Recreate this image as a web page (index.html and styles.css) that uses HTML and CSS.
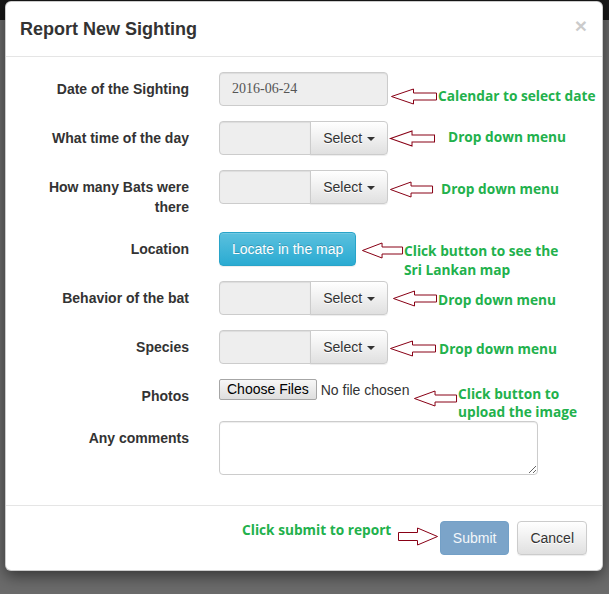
FILE: index.html
```html
<!DOCTYPE html>
<html lang="en">
<head>
<meta charset="utf-8">
<title>Report New Sighting</title>
<link rel="stylesheet" href="styles.css">
</head>
<body>
<div class="modal">
  <div class="modal-header">
    <h4 class="modal-title">Report New Sighting</h4>
    <button class="close" type="button">×</button>
  </div>
  <div class="modal-body">
    <div class="row">
      <label class="label">Date of the Sighting</label>
      <div class="ctrl"><div class="input date">2016-06-24</div></div>
    </div>
    <div class="row">
      <label class="label">What time of the day</label>
      <div class="ctrl"><div class="input-group"><div class="input"></div><button class="btn btn-default btn-select" type="button">Select <span class="caret"></span></button></div></div>
    </div>
    <div class="row">
      <label class="label">How many Bats were there</label>
      <div class="ctrl"><div class="input-group"><div class="input"></div><button class="btn btn-default btn-select" type="button">Select <span class="caret"></span></button></div></div>
    </div>
    <div class="row">
      <label class="label">Location</label>
      <div class="ctrl"><button class="btn btn-info" type="button">Locate in the map</button></div>
    </div>
    <div class="row">
      <label class="label">Behavior of the bat</label>
      <div class="ctrl"><div class="input-group"><div class="input"></div><button class="btn btn-default btn-select" type="button">Select <span class="caret"></span></button></div></div>
    </div>
    <div class="row">
      <label class="label">Species</label>
      <div class="ctrl"><div class="input-group"><div class="input"></div><button class="btn btn-default btn-select" type="button">Select <span class="caret"></span></button></div></div>
    </div>
    <div class="row">
      <label class="label">Photos</label>
      <div class="ctrl file"><button class="file-btn" type="button">Choose Files</button><span class="file-none">No file chosen</span></div>
    </div>
    <div class="row">
      <label class="label">Any comments</label>
      <div class="ctrl"><textarea class="textarea" rows="2"></textarea></div>
    </div>
  </div>
  <div class="modal-footer">
    <button class="btn btn-primary" type="button">Submit</button>
    <button class="btn btn-default" type="button">Cancel</button>
  </div>
</div>

<svg class="arrow a1" viewBox="0 0 46 17" preserveAspectRatio="none"><polygon points="0.5,8.5 22.5,1 22.5,5 45.5,5 45.5,12 22.5,12 22.5,16"/></svg>
<div class="note t1">Calendar to select date</div>

<svg class="arrow a2" viewBox="0 0 46 17" preserveAspectRatio="none"><polygon points="0.5,8.5 22.5,1 22.5,5 45.5,5 45.5,12 22.5,12 22.5,16"/></svg>
<div class="note t2">Drop down menu</div>

<svg class="arrow a3" viewBox="0 0 46 17" preserveAspectRatio="none"><polygon points="0.5,8.5 22.5,1 22.5,5 45.5,5 45.5,12 22.5,12 22.5,16"/></svg>
<div class="note t3">Drop down menu</div>

<svg class="arrow a4" viewBox="0 0 46 17" preserveAspectRatio="none"><polygon points="0.5,8.5 22.5,1 22.5,5 45.5,5 45.5,12 22.5,12 22.5,16"/></svg>
<div class="note t4">Click button to see the<br>Sri Lankan map</div>

<svg class="arrow a5" viewBox="0 0 46 17" preserveAspectRatio="none"><polygon points="0.5,8.5 22.5,1 22.5,5 45.5,5 45.5,12 22.5,12 22.5,16"/></svg>
<div class="note t5">Drop down menu</div>

<svg class="arrow a6" viewBox="0 0 46 17" preserveAspectRatio="none"><polygon points="0.5,8.5 22.5,1 22.5,5 45.5,5 45.5,12 22.5,12 22.5,16"/></svg>
<div class="note t6">Drop down menu</div>

<svg class="arrow a7" viewBox="0 0 46 17" preserveAspectRatio="none"><polygon points="0.5,8.5 22.5,1 22.5,5 45.5,5 45.5,12 22.5,12 22.5,16"/></svg>
<div class="note t7">Click button to<br>upload the image</div>

<div class="note t8">Click submit to report</div>
<svg class="arrow a8" viewBox="0 0 40 19" preserveAspectRatio="none"><polygon points="39.5,9.5 19.5,1 19.5,5.5 0.5,5.5 0.5,13.5 19.5,13.5 19.5,18"/></svg>
</body>
</html>
```
FILE: styles.css
```css
* { box-sizing: border-box; }

body {
  margin: 0;
  width: 609px;
  height: 594px;
  overflow: hidden;
  position: relative;
  background: linear-gradient(#171717 0, #171717 20px, #6b6b6b 20px);
  font-family: "Liberation Sans", Arial, sans-serif;
  font-size: 14px;
  line-height: 20px;
  color: #333;
}

.modal {
  margin: 1px 0 0 5px;
  width: 598px;
  background: #fff;
  border: 1px solid rgba(0, 0, 0, .2);
  border-radius: 6px;
  box-shadow: 0 5px 15px rgba(0, 0, 0, .5);
}

.modal-header {
  display: flex;
  justify-content: space-between;
  align-items: flex-start;
  padding: 15px 15px 15px 14px;
  border-bottom: 1px solid #e5e5e5;
}

.modal-title {
  margin: 0;
  font-size: 18px;
  line-height: 24px;
  font-weight: bold;
  color: #333;
}

.close {
  margin-top: -2px;
  padding: 0;
  border: 0;
  background: none;
  font: bold 21px/1 "Liberation Sans", Arial, sans-serif;
  color: #000;
  opacity: .2;
}

.modal-body { padding: 15px 0; }

.row {
  display: grid;
  grid-template-columns: 168px 1fr;
  column-gap: 30px;
  padding: 0 15px;
  margin-bottom: 15px;
}

.label {
  padding-top: 7px;
  text-align: right;
  font-weight: bold;
  color: #333;
}

.input {
  height: 34px;
  padding: 6px 12px;
  border: 1px solid #ccc;
  border-radius: 4px;
  background: #eee;
  color: #555;
  box-shadow: inset 0 1px 1px rgba(0, 0, 0, .075);
}

.date {
  width: 169px;
  font-family: "Liberation Serif", "Times New Roman", serif;
}

.input-group {
  display: flex;
  width: 169px;
  height: 34px;
}

.input-group .input {
  flex: 1;
  border-radius: 4px 0 0 4px;
}

.btn {
  display: inline-block;
  height: 34px;
  padding: 6px 12px;
  font: 14px/20px "Liberation Sans", Arial, sans-serif;
  border: 1px solid transparent;
  border-radius: 4px;
  white-space: nowrap;
}

.btn-default {
  color: #333;
  background: linear-gradient(#fff, #e0e0e0);
  border-color: #ccc;
  text-shadow: 0 1px 0 #fff;
  box-shadow: inset 0 1px 0 rgba(255, 255, 255, .15), 0 1px 1px rgba(0, 0, 0, .075);
}

.btn-select {
  margin-left: -1px;
  border-radius: 0 4px 4px 0;
}

.caret {
  display: inline-block;
  width: 0;
  height: 0;
  margin-left: 1px;
  vertical-align: middle;
  border-top: 4px solid #333;
  border-right: 4px solid transparent;
  border-left: 4px solid transparent;
}

.btn-info {
  color: #fff;
  background: linear-gradient(#5bc0de, #2aabd2);
  border-color: #28a4c9;
  text-shadow: 0 -1px 0 rgba(0, 0, 0, .2);
  box-shadow: inset 0 1px 0 rgba(255, 255, 255, .15), 0 1px 1px rgba(0, 0, 0, .075);
}

.btn-primary {
  color: #f4f7fa;
  background: #7ba4c9;
  border-color: #73a0c7;
}

.file {
  display: flex;
  align-items: center;
  height: 21px;
}

.file-btn {
  height: 21px;
  padding: 0 7px;
  font: 14px/19px "Liberation Sans", Arial, sans-serif;
  color: #000;
  background: linear-gradient(#f7f7f7, #dedede);
  border: 1px solid #a6a6a6;
  border-radius: 2px;
}

.file-none {
  margin-left: 4px;
  color: #333;
}

.textarea {
  display: block;
  width: 319px;
  height: 54px;
  padding: 6px 12px;
  border: 1px solid #ccc;
  border-radius: 4px;
  background: #fff;
  box-shadow: inset 0 1px 1px rgba(0, 0, 0, .075);
  resize: vertical;
  font: 14px/20px "Liberation Sans", Arial, sans-serif;
}

.modal-footer {
  display: flex;
  justify-content: flex-end;
  gap: 8px;
  padding: 15px;
  border-top: 1px solid #e5e5e5;
}

/* annotations */
.note {
  position: absolute;
  font: 700 13.7px/18px "Open Sans", sans-serif;
  color: #22b14c;
  white-space: nowrap;
}

.arrow {
  position: absolute;
  height: 17px;
  overflow: visible;
}

.arrow polygon {
  fill: #fff;
  stroke: #880015;
  stroke-width: 1;
  vector-effect: non-scaling-stroke;
}

.a1 { left: 391px; top: 88px; width: 46px; }
.a2 { left: 390px; top: 130px; width: 45px; }
.a3 { left: 390px; top: 180.5px; width: 43px; }
.a4 { left: 362px; top: 241.5px; width: 41px; }
.a5 { left: 393px; top: 290.3px; width: 44px; }
.a6 { left: 390px; top: 339.5px; width: 46px; }
.a7 { left: 414px; top: 390px; width: 43px; }
.a8 { left: 398px; top: 526.5px; width: 40px; height: 19px; }

.t1 { left: 438px; top: 86.5px; }
.t2 { left: 448px; top: 127.8px; }
.t3 { left: 441px; top: 179.8px; }
.t4 { left: 404px; top: 240.8px; line-height: 19px; }
.t5 { left: 438px; top: 291px; }
.t6 { left: 439px; top: 339.8px; }
.t7 { left: 458px; top: 384.8px; line-height: 18.5px; }
.t8 { left: 242px; top: 520.8px; }
```
